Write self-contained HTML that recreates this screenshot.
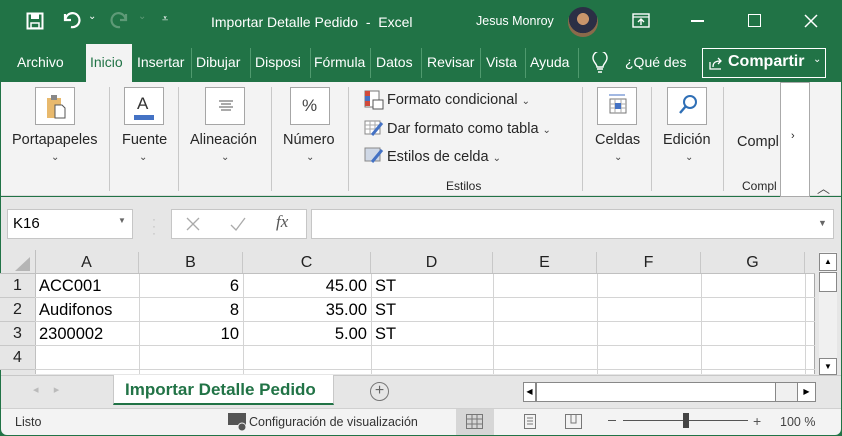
<!DOCTYPE html>
<html><head><meta charset="utf-8"><style>
*{margin:0;padding:0;box-sizing:border-box}
body{width:842px;height:436px;overflow:hidden;background:#217346;font-family:"Liberation Sans",sans-serif;position:relative}
.a{position:absolute}
.t{color:#fff;font-size:14px;white-space:nowrap}
.tab{position:absolute;top:54px;color:#fff;font-size:14px;white-space:nowrap}
.sep{position:absolute;top:48px;width:1px;height:30px;background:#4f9a6e}
.rl{font-size:14.5px;color:#262626;white-space:nowrap;text-align:center}
.btn{position:absolute;top:87px;width:40px;height:38px;border:1px solid #a6a6a6;background:#fff}
.gs{position:absolute;top:87px;width:1px;height:104px;background:#c8c8c8}
.chev{font-size:10px;color:#444}
.g{font-family:"Liberation Sans Narrow","Liberation Sans",sans-serif;font-size:16.5px;color:#000}
.vl{position:absolute;top:274px;width:1px;height:100px;background:#d4d4d4}
.hl{position:absolute;left:35px;width:780px;height:1px;background:#d4d4d4}
.ch{position:absolute;top:252px;height:22px;text-align:center;font-size:16px;color:#222;line-height:22px;border-right:1px solid #c8c8c8}
.rh{position:absolute;left:0;width:35px;height:24px;text-align:center;font-size:16px;color:#222;line-height:24px;border-bottom:1px solid #c8c8c8;background:#e6e6e6}
.cell{position:absolute;height:24px;line-height:24px;padding:0 4px}
</style></head><body>
<svg class="a" style="left:26px;top:12px" width="18" height="18" viewBox="0 0 18 18"><rect x="1.5" y="1.5" width="15" height="15" fill="none" stroke="#fff" stroke-width="2"/><rect x="5" y="2" width="8" height="5" fill="#fff"/><rect x="5" y="11" width="8" height="5" fill="#217346" stroke="#fff" stroke-width="1.5"/></svg>
<svg class="a" style="left:61px;top:11px" width="20" height="18" viewBox="0 0 20 18"><path d="M4 3v6h6" fill="none" stroke="#fff" stroke-width="2.2"/><path d="M4.5 8.5A7 7 0 1 1 10 16" fill="none" stroke="#fff" stroke-width="2.2"/></svg>
<div class="a t" style="left:88px;top:11px;font-size:10px">⌄</div>
<svg class="a" style="left:110px;top:11px" width="20" height="18" viewBox="0 0 20 18"><path d="M16 3v6h-6" fill="none" stroke="#5e9a77" stroke-width="2.2"/><path d="M15.5 8.5A7 7 0 1 0 10 16" fill="none" stroke="#5e9a77" stroke-width="2.2"/></svg>
<div class="a t" style="left:138px;top:11px;font-size:10px;color:#5e9a77">⌄</div>
<div class="a t" style="left:162px;top:13px;font-size:11px">⩡</div>
<div class="a t" style="left:211px;top:14px;font-size:14px">Importar Detalle Pedido&nbsp; -&nbsp; Excel</div>
<div class="a t" style="left:476px;top:14px;font-size:12.5px">Jesus Monroy</div>
<div class="a" style="left:568px;top:7px;width:30px;height:30px;border-radius:50%;background:radial-gradient(circle at 50% 40%,#c9956b 0 25%,#2b2f45 26% 60%,#8a6a4a 61%)"></div>
<svg class="a" style="left:632px;top:13px" width="18" height="15" viewBox="0 0 18 15"><rect x="1" y="1" width="16" height="13" fill="none" stroke="#fff" stroke-width="1.4"/><line x1="1" y1="4" x2="17" y2="4" stroke="#fff" stroke-width="1.2"/><path d="M9 12V6M6 9l3-3 3 3" fill="none" stroke="#fff" stroke-width="1.4"/></svg>
<div class="a" style="left:691px;top:20px;width:13px;height:1.5px;background:#fff"></div>
<div class="a" style="left:748px;top:14px;width:13px;height:13px;border:1.5px solid #fff"></div>
<svg class="a" style="left:804px;top:14px" width="14" height="14"><path d="M1 1L13 13M13 1L1 13" stroke="#fff" stroke-width="1.5"/></svg>
<div class="tab" style="left:17px">Archivo</div>
<div class="a" style="left:86px;top:44px;width:46px;height:40px;background:#f3f3f3"></div>
<div class="tab" style="left:90px;color:#217346">Inicio</div>
<div class="tab" style="left:137px">Insertar</div><div class="sep" style="left:191px"></div>
<div class="tab" style="left:196px">Dibujar</div><div class="sep" style="left:250px"></div>
<div class="tab" style="left:255px">Disposi</div><div class="sep" style="left:310px"></div>
<div class="tab" style="left:314px">Fórmula</div><div class="sep" style="left:370px"></div>
<div class="tab" style="left:376px">Datos</div><div class="sep" style="left:421px"></div>
<div class="tab" style="left:427px">Revisar</div><div class="sep" style="left:480px"></div>
<div class="tab" style="left:486px">Vista</div><div class="sep" style="left:525px"></div>
<div class="tab" style="left:530px">Ayuda</div><div class="sep" style="left:578px"></div>
<svg class="a" style="left:592px;top:52px" width="16" height="22" viewBox="0 0 16 22"><path d="M5 15c0-3-4-5-4-9a7 7 0 0 1 14 0c0 4-4 6-4 9z" fill="none" stroke="#fff" stroke-width="1.4"/><path d="M5 17h6M6 20h4" stroke="#fff" stroke-width="1.4"/></svg>
<div class="tab" style="left:625px">¿Qué des</div>
<div class="a" style="left:702px;top:48px;width:124px;height:30px;border:1.5px solid #fff"></div>
<svg class="a" style="left:708px;top:55px" width="16" height="16" viewBox="0 0 16 16"><path d="M2 7v7h11" fill="none" stroke="#fff" stroke-width="1.3"/><path d="M5 12c0-5 3-6 8-6M10 3l3 3-3 3" fill="none" stroke="#fff" stroke-width="1.3"/></svg>
<div class="tab" style="left:728px;top:53px;font-weight:bold;font-size:16px">Compartir</div>
<div class="tab" style="left:813px;top:54px;font-size:10px">⌄</div>
<div class="a" style="left:1px;top:82px;width:840px;height:114px;background:#f3f3f3;border-bottom:1px solid #dcdcdc"></div>
<div class="btn" style="left:35px"><svg style="position:absolute;left:9px;top:6px" width="22" height="26" viewBox="0 0 22 26"><rect x="2" y="4" width="14" height="20" fill="#e8b96d"/><rect x="6" y="1" width="6" height="5" fill="#888"/><path d="M10 11h7l3 3v10H10z" fill="#fff" stroke="#555"/></svg></div>
<div class="a rl" style="left:12px;top:132px">Portapapeles</div><div class="a chev" style="left:51px;top:152px">⌄</div>
<div class="gs" style="left:109px"></div>
<div class="btn" style="left:124px"><div style="position:absolute;left:12px;top:6px;font-size:17px;color:#333">A</div><div style="position:absolute;left:9px;top:27px;width:20px;height:5px;background:#4472c4"></div></div>
<div class="a rl" style="left:122px;top:132px">Fuente</div><div class="a chev" style="left:139px;top:152px">⌄</div>
<div class="gs" style="left:178px"></div>
<div class="btn" style="left:205px"><svg style="position:absolute;left:11px;top:12px" width="18" height="12"><path d="M2 1h14M4 4h10M2 7h14M4 10h10" stroke="#555"/></svg></div>
<div class="a rl" style="left:190px;top:132px">Alineación</div><div class="a chev" style="left:221px;top:152px">⌄</div>
<div class="gs" style="left:271px"></div>
<div class="btn" style="left:290px"><div style="position:absolute;left:11px;top:8px;font-size:17px;color:#444">%</div></div>
<div class="a rl" style="left:283px;top:132px">Número</div><div class="a chev" style="left:306px;top:152px">⌄</div>
<div class="gs" style="left:348px"></div>
<svg class="a" style="left:364px;top:90px" width="20" height="20"><rect x="1" y="1" width="14" height="16" fill="#fff" stroke="#777"/><rect x="1" y="1" width="5" height="5" fill="#d04a3a"/><rect x="1" y="6" width="5" height="5" fill="#4472c4"/><rect x="1" y="11" width="5" height="5" fill="#d04a3a"/><rect x="9" y="10" width="10" height="9" fill="#fff" stroke="#555"/></svg>
<div class="a rl" style="left:387px;top:92px">Formato condicional <span class="chev">⌄</span></div>
<svg class="a" style="left:364px;top:120px" width="20" height="18"><rect x="1" y="1" width="15" height="13" fill="#fff" stroke="#888"/><path d="M1 5h15M1 9h15M6 1v13M11 1v13" stroke="#aaa"/><path d="M18 3L8 15" stroke="#4472c4" stroke-width="3"/></svg>
<div class="a rl" style="left:387px;top:121px">Dar formato como tabla <span class="chev">⌄</span></div>
<svg class="a" style="left:364px;top:147px" width="20" height="18"><rect x="1" y="1" width="15" height="13" fill="#cfd8e6" stroke="#888"/><path d="M18 3L8 15" stroke="#4472c4" stroke-width="3"/></svg>
<div class="a rl" style="left:387px;top:149px">Estilos de celda <span class="chev">⌄</span></div>
<div class="a rl" style="left:446px;top:179px;font-size:12px">Estilos</div>
<div class="gs" style="left:582px"></div>
<div class="btn" style="left:597px"><svg style="position:absolute;left:10px;top:5px" width="20" height="26"><path d="M1 2h16" stroke="#4472c4"/><rect x="2" y="6" width="16" height="14" fill="#fff" stroke="#777"/><path d="M2 11h16M2 15h16M7 6v14M13 6v14" stroke="#aaa"/><rect x="7" y="10" width="6" height="6" fill="#4472c4"/></svg></div>
<div class="a rl" style="left:595px;top:132px">Celdas</div><div class="a chev" style="left:614px;top:152px">⌄</div>
<div class="gs" style="left:651px"></div>
<div class="btn" style="left:667px"><svg style="position:absolute;left:10px;top:6px" width="20" height="24"><circle cx="12" cy="8" r="6" fill="none" stroke="#2f6fb6" stroke-width="2"/><path d="M8 12L2 19" stroke="#2f6fb6" stroke-width="2.4"/></svg></div>
<div class="a rl" style="left:663px;top:132px">Edición</div><div class="a chev" style="left:685px;top:152px">⌄</div>
<div class="gs" style="left:723px"></div>
<div class="a rl" style="left:737px;top:134px">Compl</div>
<div class="a rl" style="left:742px;top:179px;font-size:12px">Compl</div>
<div class="a" style="left:780px;top:82px;width:30px;height:115px;background:#fff;border:1px solid #aaa"></div>
<div class="a rl" style="left:791px;top:130px;font-size:11px">›</div>
<div class="a rl" style="left:817px;top:178px;font-size:13px;color:#444">︿</div>
<div class="a" style="left:1px;top:197px;width:840px;height:178px;background:#e6e6e6"></div>
<div class="a" style="left:7px;top:209px;width:126px;height:30px;background:#fff;border:1px solid #c6c6c6"></div>
<div class="a" style="left:13px;top:215px;font-size:15px">K16</div>
<div class="a" style="left:118px;top:216px;font-size:8px;color:#666">▼</div>
<div class="a" style="left:152px;top:216px;color:#bbb;font-size:12px;line-height:7px">·<br>·<br>·</div>
<div class="a" style="left:171px;top:209px;width:136px;height:30px;background:#fff;border:1px solid #c6c6c6"></div>
<svg class="a" style="left:185px;top:216px" width="16" height="16"><path d="M2 2l12 12M14 2L2 14" stroke="#aaa" stroke-width="1.3"/></svg>
<svg class="a" style="left:229px;top:216px" width="18" height="16"><path d="M2 9l5 5 9-12" fill="none" stroke="#aaa" stroke-width="1.3"/></svg>
<div class="a" style="left:276px;top:212px;font-family:'Liberation Serif',serif;font-style:italic;font-size:17px;color:#555">fx</div>
<div class="a" style="left:311px;top:209px;width:523px;height:30px;background:#fff;border:1px solid #c6c6c6"></div>
<div class="a" style="left:818px;top:218px;font-size:9px;color:#666">▼</div>
<div class="a" style="left:35px;top:274px;width:780px;height:100px;background:#fff"></div>
<svg class="a" style="left:13px;top:256px" width="18" height="16"><path d="M17 1V15H2z" fill="#b5b5b5"/></svg>
<div class="ch" style="left:35px;width:104px">A</div>
<div class="ch" style="left:139px;width:104px">B</div>
<div class="ch" style="left:243px;width:128px">C</div>
<div class="ch" style="left:371px;width:122px">D</div>
<div class="ch" style="left:493px;width:104px">E</div>
<div class="ch" style="left:597px;width:104px">F</div>
<div class="ch" style="left:701px;width:104px">G</div>
<div class="a" style="left:0;top:273px;width:815px;height:1px;background:#c0c0c0"></div>
<div class="a" style="left:35px;top:250px;width:1px;height:124px;background:#c0c0c0"></div>
<div class="rh" style="top:274px">1</div><div class="rh" style="top:298px">2</div><div class="rh" style="top:322px">3</div><div class="rh" style="top:346px">4</div>
<div class="vl" style="left:139px"></div><div class="vl" style="left:243px"></div><div class="vl" style="left:371px"></div><div class="vl" style="left:493px"></div><div class="vl" style="left:597px"></div><div class="vl" style="left:701px"></div><div class="vl" style="left:805px"></div>
<div class="a" style="left:814px;top:274px;width:1px;height:100px;background:#a8a8a8"></div>
<div class="hl" style="top:297px"></div><div class="hl" style="top:321px"></div><div class="hl" style="top:345px"></div><div class="hl" style="top:369px"></div>
<div class="cell g" style="left:35px;top:274px">ACC001</div>
<div class="cell g" style="left:139px;top:274px;width:104px;text-align:right">6</div>
<div class="cell g" style="left:243px;top:274px;width:128px;text-align:right">45.00</div>
<div class="cell g" style="left:371px;top:274px">ST</div>
<div class="cell g" style="left:35px;top:298px">Audifonos</div>
<div class="cell g" style="left:139px;top:298px;width:104px;text-align:right">8</div>
<div class="cell g" style="left:243px;top:298px;width:128px;text-align:right">35.00</div>
<div class="cell g" style="left:371px;top:298px">ST</div>
<div class="cell g" style="left:35px;top:322px">2300002</div>
<div class="cell g" style="left:139px;top:322px;width:104px;text-align:right">10</div>
<div class="cell g" style="left:243px;top:322px;width:128px;text-align:right">5.00</div>
<div class="cell g" style="left:371px;top:322px">ST</div>
<div class="a" style="left:819px;top:252px;width:18px;height:122px;background:#f0f0f0"></div>
<div class="a" style="left:819px;top:253px;width:18px;height:18px;background:#fff;border:1px solid #888;font-size:8px;text-align:center;line-height:16px">▲</div>
<div class="a" style="left:819px;top:272px;width:18px;height:20px;background:#fff;border:1px solid #888"></div>
<div class="a" style="left:819px;top:358px;width:18px;height:17px;background:#fff;border:1px solid #888;font-size:8px;text-align:center;line-height:15px">▼</div>
<div class="a" style="left:1px;top:375px;width:840px;height:33px;background:#e6e6e6;border-top:1px solid #c8c8c8"></div>
<div class="a" style="left:33px;top:383px;font-size:11px;color:#bbb">◂ &nbsp;&nbsp;&nbsp; ▸</div>
<div class="a" style="left:113px;top:375px;width:221px;height:30px;background:#fff;border-left:1px solid #c8c8c8;border-right:1px solid #c8c8c8;border-bottom:2px solid #217346"></div>
<div class="a" style="left:125px;top:380px;font-weight:bold;font-size:17px;color:#217346">Importar Detalle Pedido</div>
<div class="a" style="left:370px;top:382px;width:19px;height:19px;border:1.3px solid #777;border-radius:50%;text-align:center;line-height:16px;font-size:16px;color:#666">+</div>
<div class="a" style="left:523px;top:382px;width:293px;height:20px;background:#f0f0f0;border:1px solid #888"></div>
<div class="a" style="left:523px;top:382px;width:13px;height:20px;background:#fff;border:1px solid #888;font-size:8px;line-height:18px;text-align:center">◀</div>
<div class="a" style="left:536px;top:382px;width:240px;height:20px;background:#fff;border:1px solid #888"></div>
<div class="a" style="left:797px;top:382px;width:19px;height:20px;background:#fff;border:1px solid #888;font-size:8px;line-height:18px;text-align:center">▶</div>
<div class="a" style="left:1px;top:408px;width:840px;height:27px;background:#f3f3f3;border-top:1px solid #d0d0d0;border-radius:0 0 6px 6px"></div>
<div class="a" style="left:15px;top:415px;font-size:12.5px;color:#333">Listo</div>
<svg class="a" style="left:228px;top:413px" width="20" height="18"><rect x="0" y="0" width="18" height="12" fill="#555"/><circle cx="14" cy="14" r="4" fill="#555" stroke="#f3f3f3"/></svg>
<div class="a" style="left:249px;top:415px;font-size:12.5px;color:#333">Configuración de visualización</div>
<div class="a" style="left:456px;top:409px;width:38px;height:26px;background:#d6d6d6"></div>
<svg class="a" style="left:466px;top:414px" width="18" height="16"><rect x="0.5" y="0.5" width="16" height="14" fill="none" stroke="#777"/><path d="M0 5h17M0 10h17M6 0v15M11 0v15" stroke="#777"/></svg>
<svg class="a" style="left:522px;top:414px" width="16" height="16"><rect x="2.5" y="0.5" width="11" height="14" fill="none" stroke="#777"/><path d="M5 4h6M5 7h6M5 10h6" stroke="#777"/></svg>
<svg class="a" style="left:565px;top:414px" width="18" height="16"><rect x="0.5" y="0.5" width="16" height="14" fill="none" stroke="#777"/><path d="M6 0v9h5V0" fill="none" stroke="#777"/></svg>
<div class="a" style="left:608px;top:420px;width:8px;height:1px;background:#555"></div>
<div class="a" style="left:623px;top:420px;width:125px;height:1px;background:#555"></div>
<div class="a" style="left:683px;top:413px;width:6px;height:15px;background:#444"></div>
<div class="a" style="left:753px;top:413px;font-size:14px;color:#555">+</div>
<div class="a" style="left:780px;top:415px;font-size:12.5px;color:#444">100 %</div>
</body></html>
